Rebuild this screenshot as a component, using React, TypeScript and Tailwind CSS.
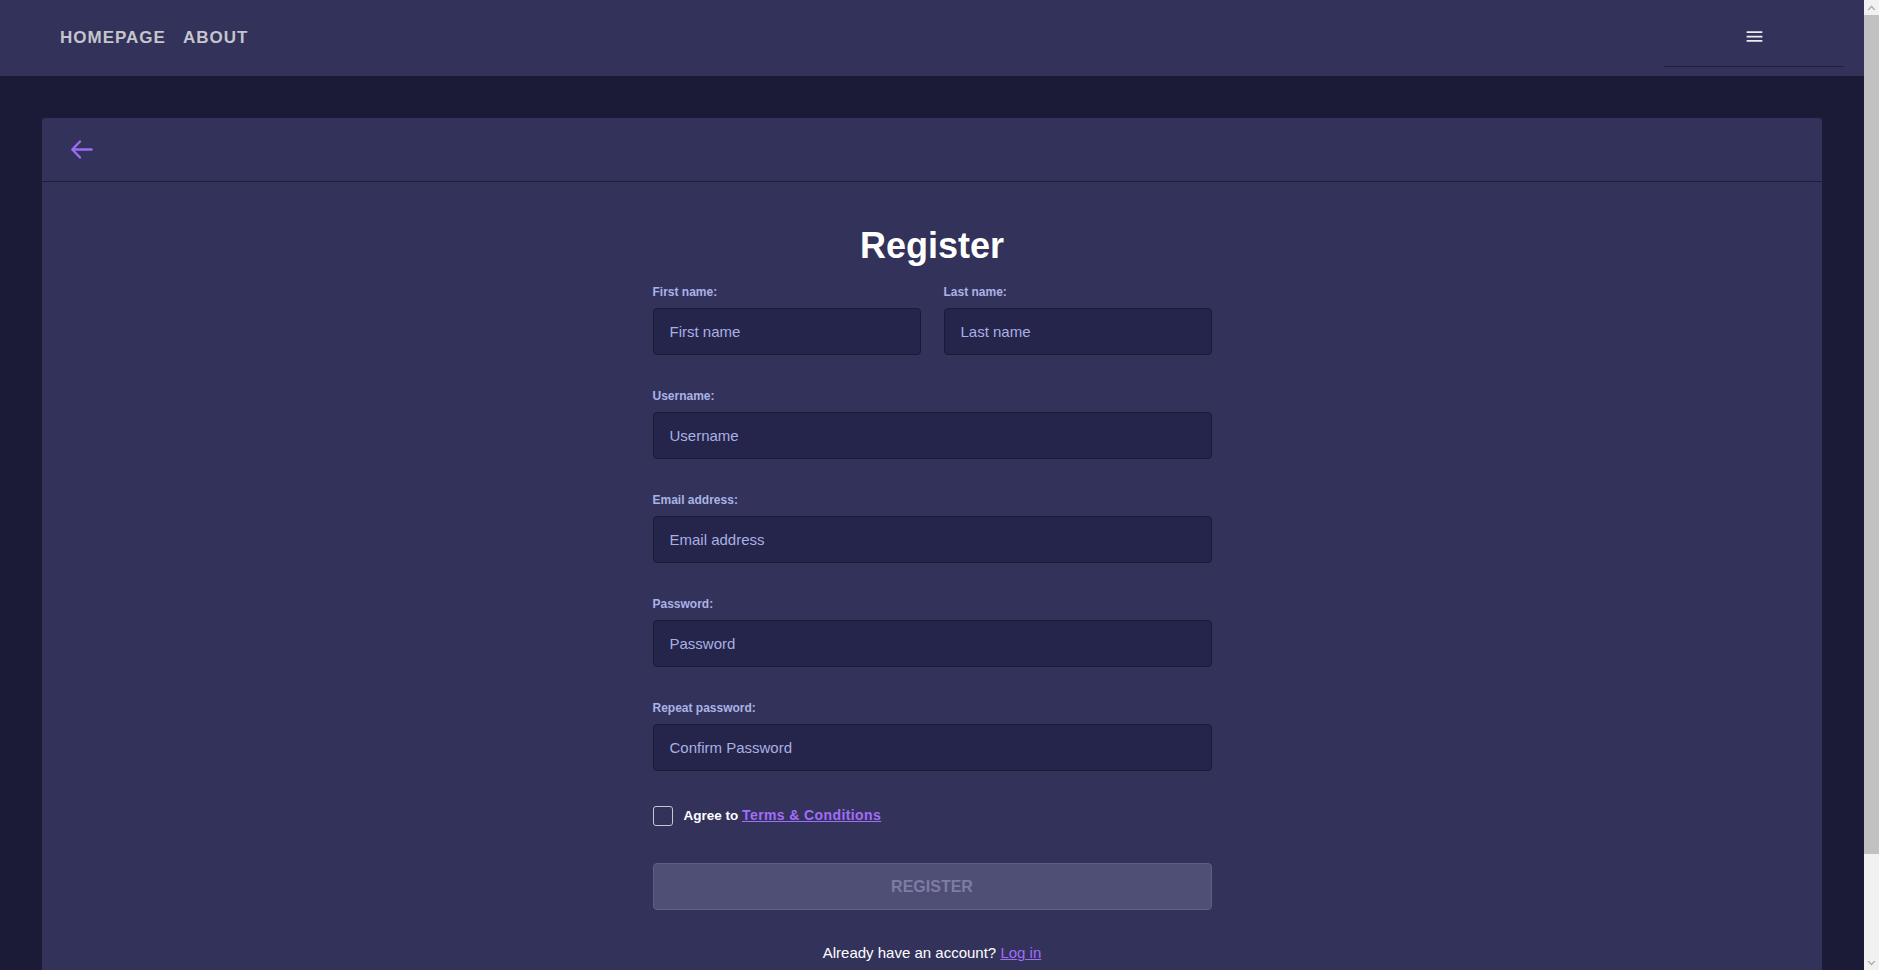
import { MdMenu } from 'react-icons/md';

function Field({ label, placeholder, type = 'text' }: { label: string; placeholder: string; type?: string }) {
  return (
    <div className="flex flex-col">
      <label className="text-[12px] leading-[16px] font-bold text-[#aab2e6]">{label}</label>
      <input
        type={type}
        placeholder={placeholder}
        className="mt-[8px] h-[47px] w-full rounded-[4px] border border-[#1b1a36] bg-[#25244a] px-[16px] text-[15px] text-white outline-none placeholder:text-[#a9b0e2]"
      />
    </div>
  );
}

function Navbar() {
  return (
    <nav className="flex h-[76px] items-start justify-between bg-[#33325a] pl-[60px] pr-[20px]">
      <div className="flex h-[76px] items-center gap-[17px] text-[17px] font-bold tracking-[1px] text-[#c5c5cd]">
        <a href="#">HOMEPAGE</a>
        <a href="#">ABOUT</a>
      </div>
      <div className="flex h-[67px] w-[180px] justify-center border-b border-[#1f1e3b] pt-[26px]">
        <MdMenu className="h-[21px] w-[21px] text-[#ebebf3]" />
      </div>
    </nav>
  );
}

// drawn page scrollbar, as in the screenshot
function Scrollbar() {
  return (
    <aside className="flex h-screen w-[15px] shrink-0 flex-col bg-[#f1f1f1]">
      <div className="flex h-[15px] items-center justify-center">
        <svg width="9" height="6" viewBox="0 0 9 6" fill="#a3a3a3">
          <path d="M4.5 0.5L8.5 5H7L4.5 2.3L2 5H0.5z" />
        </svg>
      </div>
      <div className="h-[839px] bg-[#c1c1c1]" />
      <div className="flex-1" />
      <div className="flex h-[15px] items-center justify-center">
        <svg width="9" height="6" viewBox="0 0 9 6" fill="#a3a3a3">
          <path d="M4.5 5.5L8.5 1H7L4.5 3.7L2 1H0.5z" />
        </svg>
      </div>
    </aside>
  );
}

export default function App() {
  return (
    <div className="flex h-screen overflow-hidden bg-[#1c1b37] font-['Liberation_Sans',Arial,sans-serif]">
      <div className="min-w-0 flex-1 overflow-y-auto">
        <Navbar />
        <main className="px-[41px] pt-[41px] pb-[41px]">
          <div className="rounded-t-[4px] border border-[#1d1c38] bg-[#33325a]">
            <div className="flex h-[64px] items-center border-b border-[#1e1d3a] pl-[28px]">
              <button className="text-[#9d6cf6]">
                <svg width="23" height="21" viewBox="0 0 23 21" fill="none" stroke="currentColor" strokeWidth="2.4" strokeLinecap="round" strokeLinejoin="round">
                  <path d="M21.5 10.5H3" />
                  <path d="M10 2.5L2.3 10.5l7.7 8" />
                </svg>
              </button>
            </div>
            <div className="flex justify-center pt-[44px] pb-[82px]">
              <form className="flex w-[559px] flex-col" onSubmit={(e) => e.preventDefault()}>
                <h1 className="text-center text-[36px] leading-[40px] font-bold text-white">Register</h1>
                <div className="mt-[18px] grid grid-cols-2 gap-[23px]">
                  <Field label="First name:" placeholder="First name" />
                  <Field label="Last name:" placeholder="Last name" />
                </div>
                <div className="mt-[33px] flex flex-col gap-[33px]">
                  <Field label="Username:" placeholder="Username" />
                  <Field label="Email address:" placeholder="Email address" type="email" />
                  <Field label="Password:" placeholder="Password" type="password" />
                  <Field label="Repeat password:" placeholder="Confirm Password" type="password" />
                </div>
                <div className="mt-[34px] flex items-center gap-[11px]">
                  <input type="checkbox" className="h-[20px] w-[20px] appearance-none rounded-[3px] border-[1.5px] border-[#c5c5d5] bg-transparent" />
                  <span className="text-[13.5px] font-bold text-white">
                    Agree to{' '}
                    <a href="#" className="text-[14px] tracking-[0.4px] text-[#a06ef8] underline">Terms &amp; Conditions</a>
                  </span>
                </div>
                <button
                  type="submit"
                  disabled
                  className="mt-[37px] h-[47px] w-full rounded-[4px] border border-[#5f5e86] bg-[#4f4e74] text-[16px] font-bold text-[#7c7ca4]"
                >
                  REGISTER
                </button>
                <p className="mt-[34px] text-center text-[15px] leading-[18px] text-white">
                  Already have an account?{' '}
                  <a href="#" className="text-[#a06ef8] underline">Log in</a>
                </p>
              </form>
            </div>
          </div>
        </main>
      </div>
      <Scrollbar />
    </div>
  );
}
